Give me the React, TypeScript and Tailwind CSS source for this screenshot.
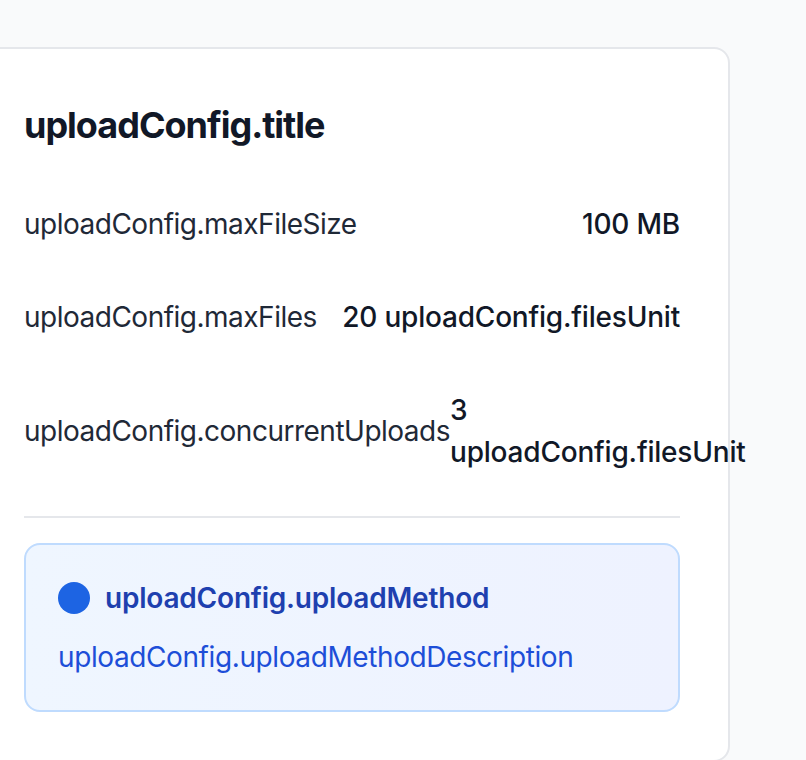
import React from "react";

export default function App() {
  const font = { fontFamily: 'Inter, "Noto Sans", sans-serif' };
  return (
    <div className="min-h-screen w-full bg-[#f9fafb] pt-[47px] overflow-hidden" style={font}>
      <div className="ml-[-26px] w-[756px] rounded-[16px] border-2 border-[#e5e7eb] bg-white p-[48px]">
        <h2 className="mb-[50px] text-[36px] font-bold leading-[56px] tracking-[-1px] text-[#111827]">uploadConfig.title</h2>
        <div className="flex flex-col gap-[51px] text-[28px] leading-[42px] tracking-[-0.5px]">
          <div className="flex items-center justify-between">
            <span className="text-[#1f2937]">uploadConfig.maxFileSize</span>
            <span className="font-medium tracking-[-0.2px] text-[#111827]">100 MB</span>
          </div>
          <div className="flex items-center justify-between">
            <span className="text-[#1f2937]">uploadConfig.maxFiles</span>
            <span className="font-medium tracking-[-0.2px] text-[#111827]">20 uploadConfig.filesUnit</span>
          </div>
          <div className="flex items-center justify-between">
            <span className="text-[#1f2937]">uploadConfig.concurrentUploads</span>
            <span className="font-medium tracking-[-0.2px] text-[#111827]">3 uploadConfig.filesUnit</span>
          </div>
        </div>
        <div className="mt-[43px] h-[2px] bg-[#e5e7eb]" />
        <div className="mt-[25px] rounded-[16px] border-2 border-[#bfdbfe] bg-gradient-to-r from-[#eff6ff] to-[#eef2ff] p-[32px]">
          <div className="mb-[17px] flex items-center gap-[15px]">
            <span className="h-[32px] w-[32px] shrink-0 rounded-full bg-[#1d64e3]" />
            <span className="text-[28px] font-semibold leading-[42px] tracking-[-0.2px] text-[#1e40af]">uploadConfig.uploadMethod</span>
          </div>
          <p className="text-[28px] leading-[42px] tracking-[-0.4px] text-[#1d4ed8]">uploadConfig.uploadMethodDescription</p>
        </div>
      </div>
    </div>
  );
}
